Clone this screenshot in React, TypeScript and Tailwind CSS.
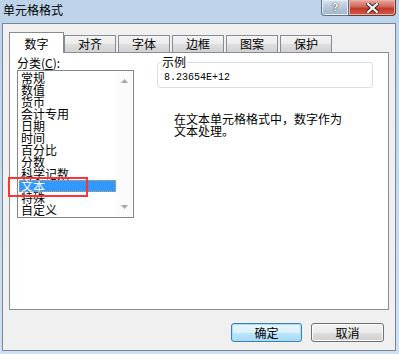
import React from "react";

const cjk = { fontFamily: '"Noto Sans CJK SC", "Noto Sans", sans-serif' };
const mono = { fontFamily: '"Liberation Mono", "DejaVu Sans Mono", monospace' };

const items = ["常规", "数值", "货币", "会计专用", "日期", "时间", "百分比", "分数", "科学记数", "文本", "特殊", "自定义"];
const tabs = ["对齐", "字体", "边框", "图案", "保护"];

function Btn({ label, primary, w }: { label: string; primary?: boolean; w: string }) {
  return (
    <div
      className={`${w} h-[19px] rounded-[3px] border flex items-center justify-center text-[12px] leading-[12px] text-black ${
        primary
          ? "border-[#3c7fb1] shadow-[inset_0_0_0_1px_#a7dcf7] bg-[linear-gradient(to_bottom,#eaf6fd_0%,#d9f0fc_50%,#bee6fd_51%,#a7d9f5_100%)]"
          : "border-[#707070] shadow-[inset_0_0_0_1px_#fcfcfc] bg-[linear-gradient(to_bottom,#f2f2f2_0%,#ebebeb_50%,#dddddd_51%,#cfcfcf_100%)]"
      }`}
      style={cjk}
    >
      {label}
    </div>
  );
}

export default function App() {
  return (
    <div className="relative w-[399px] h-[354px] overflow-hidden bg-[linear-gradient(to_bottom,#bcd3ea,#cfe0f1)]" style={cjk}>
      {/* Title bar */}
      <div className="h-[23px] flex items-start justify-between">
        <div className="pl-[3px] pt-[4px] text-[12px] leading-[12px] text-black">单元格格式</div>
        <div className="flex mr-[3px]">
          <div className="w-[28px] h-[16px] rounded-bl-[4px] border border-t-0 border-[#5f6f84] bg-[linear-gradient(to_bottom,#d9e3ee,#b7c6d8_50%,#a4b6cb)] flex items-center justify-center shadow-[inset_0_0_0_1px_#e6eef7]">
            <span className="text-[11px] leading-[11px] font-bold text-white [text-shadow:0_0_1px_#333,0_0_1px_#333]" style={{ fontFamily: '"Liberation Sans", sans-serif' }}>?</span>
          </div>
          <div className="w-[47px] h-[16px] rounded-br-[4px] border border-t-0 border-l-0 border-[#5f3a36] bg-[linear-gradient(to_bottom,#e7aaa0,#d0665a_45%,#c2392d_55%,#d45a45)] flex items-center justify-center shadow-[inset_0_0_0_1px_#e9b0a8]">
            <svg width="13" height="10" viewBox="0 0 13 10">
              <path d="M2 1 L11 9 M11 1 L2 9" stroke="#3a2422" strokeWidth="4" strokeLinecap="square" />
              <path d="M2 1 L11 9 M11 1 L2 9" stroke="#ffffff" strokeWidth="2.2" strokeLinecap="square" />
            </svg>
          </div>
        </div>
      </div>

      {/* Client area */}
      <div className="mx-[2px] w-[394px] h-[328px] border border-[#7b8694] bg-[#f0f0f0] flex flex-col">
        {/* Tab strip */}
        <div className="mt-[8px] ml-[6px] h-[20px] flex items-end">
          <div className="relative z-10 -mb-[1px] w-[55px] h-[21px] border border-b-0 border-[#898c95] bg-white flex items-center justify-center text-[12px] leading-[12px] text-black">
            <span className="mt-[2px]">数字</span>
          </div>
          <div className="flex gap-[2px]">
            {tabs.map((t) => (
              <div
                key={t}
                className="w-[52px] h-[17px] border border-b-0 border-[#898c95] bg-[linear-gradient(to_bottom,#f3f3f3,#ebebeb_50%,#dedede_51%,#d2d2d2)] flex items-center justify-center text-[12px] leading-[12px] text-black"
              >
                {t}
              </div>
            ))}
          </div>
        </div>

        {/* Tab panel */}
        <div className="ml-[6px] w-[380px] h-[258px] border border-[#898c95] bg-white flex">
          {/* Left column */}
          <div className="pl-[7px] flex flex-col">
            <div className="mt-[3px] h-[14px] text-[12px] leading-[14px] text-black whitespace-nowrap">
              分类(<span className="underline">C</span>):
            </div>
            <div className="w-[117px] h-[148px] border border-[#828790] bg-white flex">
              <div className="flex-1 pt-[1px] pl-[1px] flex flex-col">
                {items.map((it) => (
                  <div
                    key={it}
                    className={`h-[12px] text-[12px] leading-[12px] pl-[2px] whitespace-nowrap ${
                      it === "文本" ? "bg-[#3399ff] text-white outline outline-1 outline-dotted outline-[#d6a14a] -outline-offset-1" : "text-black"
                    }`}
                  >
                    {it}
                  </div>
                ))}
              </div>
              <div className="w-[17px] bg-[#fbfbfb] flex flex-col items-center justify-between pt-[8px] pb-[8px]">
                <svg width="7" height="4" viewBox="0 0 7 4">
                  <path d="M0 4 L3.5 0 L7 4 Z" fill="#a8a8a8" />
                </svg>
                <svg width="7" height="4" viewBox="0 0 7 4">
                  <path d="M0 0 L3.5 4 L7 0 Z" fill="#a8a8a8" />
                </svg>
              </div>
            </div>
          </div>

          {/* Right column */}
          <div className="ml-[23px] flex flex-col">
            <div className="relative mt-[9px] w-[216px] h-[26px] rounded-[3px] border border-[#d5dfe5]">
              <span className="absolute left-[3px] top-[-8px] bg-white px-[1px] text-[12px] leading-[13px] text-black">示例</span>
              <div className="pt-[10px] pl-[6px] text-[10px] leading-[10px] text-black" style={mono}>
                8.23654E+12
              </div>
            </div>
            <div className="mt-[25px] pl-[17px] text-[12px] leading-[12px] text-black whitespace-nowrap">
              在文本单元格格式中，数字作为
              <br />
              文本处理。
            </div>
          </div>
        </div>

        {/* Buttons */}
        <div className="mt-[13px] pr-[11px] flex justify-end gap-[9px]">
          <Btn label="确定" primary w="w-[71px]" />
          <Btn label="取消" w="w-[73px]" />
        </div>
      </div>

      {/* Red annotation rectangle */}
      <div className="absolute left-[8px] top-[177px] w-[80px] h-[20px] border-2 border-[#ff3333]" />
    </div>
  );
}
